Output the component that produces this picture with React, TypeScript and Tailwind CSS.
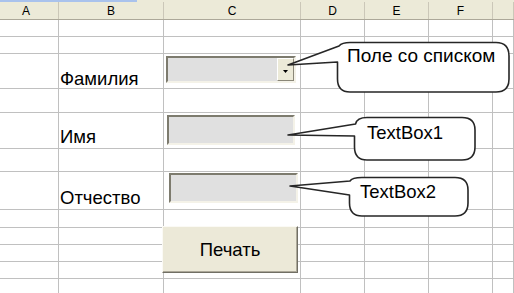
import React from "react";

const cols = "grid grid-cols-[59px_105px_137px_64px_64px_64px_1fr]";

const headers = ["A", "B", "C", "D", "E", "F", ""];

type Row = { h: string; label?: string; pb?: string };

const rows: Row[] = [
  { h: "h-[17px]" },
  { h: "h-[17px]" },
  { h: "h-[35px]", label: "Фамилия", pb: "pb-0" },
  { h: "h-[24px]" },
  { h: "h-[36px]", label: "Имя", pb: "pb-[2px]" },
  { h: "h-[23px]" },
  { h: "h-[38px]", label: "Отчество", pb: "pb-[2px]" },
  { h: "h-[18px]" },
  { h: "h-[17px]" },
  { h: "h-[17px]" },
  { h: "h-[17px]" },
  { h: "h-[17px]" },
];

function Sheet() {
  return (
    <div>
      {/* column headers */}
      <div className="bg-[#ecead8]">
        <div className="h-[2px] w-[137px] bg-[#a9c2ec]" />
        <div className={`${cols} h-[18px] border-b border-[#aca899]`}>
          {headers.map((h, i) => (
            <div
              key={i}
              className={`flex items-center justify-center border-r border-[#cbc7b8] text-[12px] leading-none text-black ${
                i === 0 ? "pr-[6px]" : ""
              }`}
            >
              {h}
            </div>
          ))}
        </div>
      </div>

      {rows.map((r, ri) => (
        <div key={ri} className={`${cols} ${r.h}`}>
          {headers.map((_, ci) => (
            <div
              key={ci}
              className={`flex items-end border-r border-b border-[#c0c0c0] ${ci === 1 ? `pl-[1px] ${r.pb ?? ""}` : ""}`}
            >
              {ci === 1 && r.label ? (
                <span className="text-[18.5px] leading-[18px] text-black">{r.label}</span>
              ) : null}
            </div>
          ))}
        </div>
      ))}
    </div>
  );
}

const sunken =
  "border-2 border-t-[#7d7b6e] border-l-[#7d7b6e] border-b-[#f4f2e8] border-r-[#f4f2e8] bg-[#e0e0e0]";

function Controls() {
  return (
    <>
      {/* combo box */}
      <div className={`absolute left-[166px] top-[56px] flex h-[27px] w-[130px] justify-end ${sunken}`}>
        <div className="flex w-[17px] items-center justify-center border border-t-white border-l-white border-b-[#8a8778] border-r-[#8a8778] bg-[#ecead8]">
          <svg width="5" height="3" viewBox="0 0 5 3" className="mt-[4px]">
            <path d="M0 0h5L2.5 3z" fill="#000" />
          </svg>
        </div>
      </div>

      {/* text boxes */}
      <div className={`absolute left-[167px] top-[115px] h-[30px] w-[128px] ${sunken}`} />
      <div className={`absolute left-[169px] top-[173px] h-[30px] w-[129px] ${sunken}`} />

      {/* print button */}
      <button className="absolute left-[162px] top-[226px] flex h-[47px] w-[136px] items-center justify-center border border-t-[#fbfaf5] border-l-[#fbfaf5] border-b-[#716f64] border-r-[#716f64] bg-[#ece9d8] text-[18.5px] leading-5 text-black shadow-[inset_-1px_-1px_0_#aca899]">
        Печать
      </button>
    </>
  );
}

function Callouts() {
  return (
    <>
      <svg className="pointer-events-none absolute inset-0" width="514" height="293">
        <g fill="#fff" stroke="#262626" strokeWidth="1.6" strokeLinejoin="round">
          <path d="M350 42.5H496Q509 42.5 509 56V79Q509 92 496 92H350Q337.5 92 337.5 79V62L288 65L339 46Q342 42.5 350 42.5Z" />
          <path d="M367 117.5H462Q475 117.5 475 130V147Q475 160 462 160H367Q354.5 160 354.5 147V136L288 135L355.5 124Q357 117.5 367 117.5Z" />
          <path d="M362 177.5H455Q468 177.5 468 190V203Q468 216 455 216H362Q349.5 216 349.5 203V195L290 186L350 181Q352 177.5 362 177.5Z" />
        </g>
      </svg>
      <div className="absolute left-[347px] top-[46px] text-[19px] leading-5 text-black">Поле со списком</div>
      <div className="absolute left-[367px] top-[123px] text-[18.5px] leading-5 text-black">TextBox1</div>
      <div className="absolute left-[360px] top-[182px] text-[18.5px] leading-5 text-black">TextBox2</div>
    </>
  );
}

export default function App() {
  return (
    <div className="relative h-[293px] w-[514px] overflow-hidden bg-white font-['Liberation_Sans',Arial,sans-serif]">
      <Sheet />
      <Controls />
      <Callouts />
    </div>
  );
}
